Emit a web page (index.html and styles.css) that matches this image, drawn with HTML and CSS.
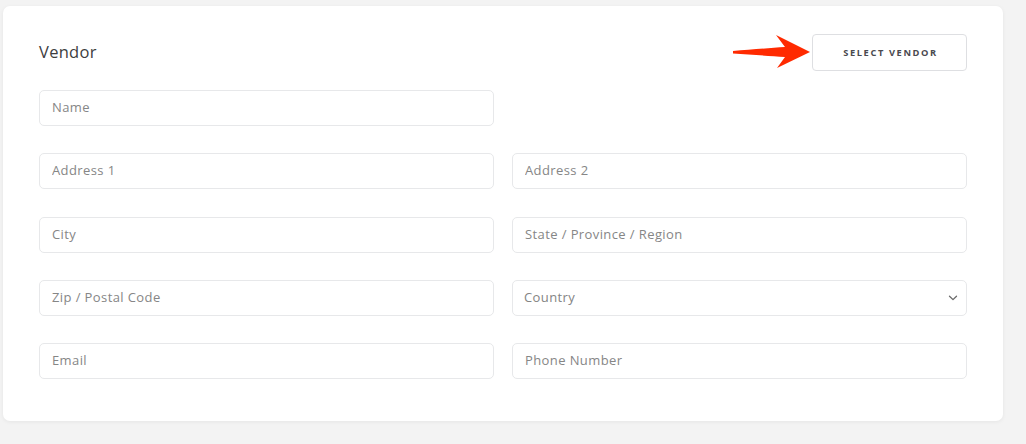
FILE: index.html
```html
<!DOCTYPE html>
<html lang="en">
<head>
<meta charset="utf-8">
<title>Vendor</title>
<link rel="stylesheet" href="styles.css">
</head>
<body>
<div class="card">
  <div class="card-header">
    <h2 class="title">Vendor</h2>
    <div class="actions">
      <svg class="arrow" width="84" height="40" viewBox="0 0 84 40" aria-hidden="true">
        <path d="M3 19 C 20 17.5, 40 16, 55 15 L 46 3 L 80 20 L 47 36 L 55 25 C 40 24, 20 22.5, 3 21.5 Z" fill="#ff2a00"/>
      </svg>
      <button class="btn" type="button">SELECT VENDOR</button>
    </div>
  </div>
  <div class="form">
    <input class="field" type="text" placeholder="Name">
    <div></div>
    <input class="field" type="text" placeholder="Address 1">
    <input class="field" type="text" placeholder="Address 2">
    <input class="field" type="text" placeholder="City">
    <input class="field" type="text" placeholder="State / Province / Region">
    <input class="field" type="text" placeholder="Zip / Postal Code">
    <div class="select-wrap">
      <select class="field select">
        <option>Country</option>
      </select>
      <svg class="chev" width="10" height="6" viewBox="0 0 10 6" aria-hidden="true"><path d="M1.5 1.2 L5 4.6 L8.5 1.2" fill="none" stroke="#6a6a6a" stroke-width="1.3" stroke-linecap="round" stroke-linejoin="round"/></svg>
    </div>
    <input class="field" type="text" placeholder="Email">
    <input class="field" type="text" placeholder="Phone Number">
  </div>
</div>
</body>
</html>
```
FILE: styles.css
```css
* { box-sizing: border-box; }
html, body { margin: 0; padding: 0; }
body {
  background: #f3f3f3;
  font-family: "Open Sans", "Liberation Sans", sans-serif;
  width: 1026px;
  height: 444px;
  overflow: hidden;
}
.card {
  margin: 6px 0 0 3px;
  width: 1000px;
  background: #fff;
  border-radius: 7px;
  box-shadow: 0 1px 4px rgba(0,0,0,0.06);
  padding: 28px 36px 42px 36px;
}
.card-header {
  display: flex;
  justify-content: space-between;
  align-items: center;
  height: 36px;
  margin-bottom: 20px;
}
.title {
  margin: 0 0 2px 0;
  font-weight: 400;
  font-size: 16.5px;
  color: #3d3d40;
  letter-spacing: 0.3px;
}
.actions {
  display: flex;
  align-items: center;
  position: relative;
}
.arrow {
  position: absolute;
  left: -82px;
  top: -2px;
}
.btn {
  width: 155px;
  height: 37px;
  background: #fff;
  border: 1px solid #dedfe2;
  border-radius: 4px;
  font-family: "Open Sans", "Liberation Sans", sans-serif;
  font-weight: 700;
  font-size: 9.3px;
  letter-spacing: 1.6px;
  color: #4a4a4f;
  padding: 0 0 0 2px;
}
.form {
  display: grid;
  grid-template-columns: 455px 455px;
  column-gap: 18px;
  row-gap: 27.3px;
}
.field {
  width: 100%;
  height: 36px;
  border: 1px solid #e7e8ea;
  border-radius: 5px;
  padding: 0 12px 2px 12px;
  font-family: "Open Sans", "Liberation Sans", sans-serif;
  font-size: 13px;
  letter-spacing: 0.4px;
  color: #848484;
  background: #fff;
  outline: none;
}
.field::placeholder { color: #868686; }
.select-wrap { position: relative; }
.select {
  appearance: none;
  -webkit-appearance: none;
  padding: 0 11px 2px 11px;
}
.chev {
  position: absolute;
  right: 9px;
  top: 15px;
  pointer-events: none;
}
```
